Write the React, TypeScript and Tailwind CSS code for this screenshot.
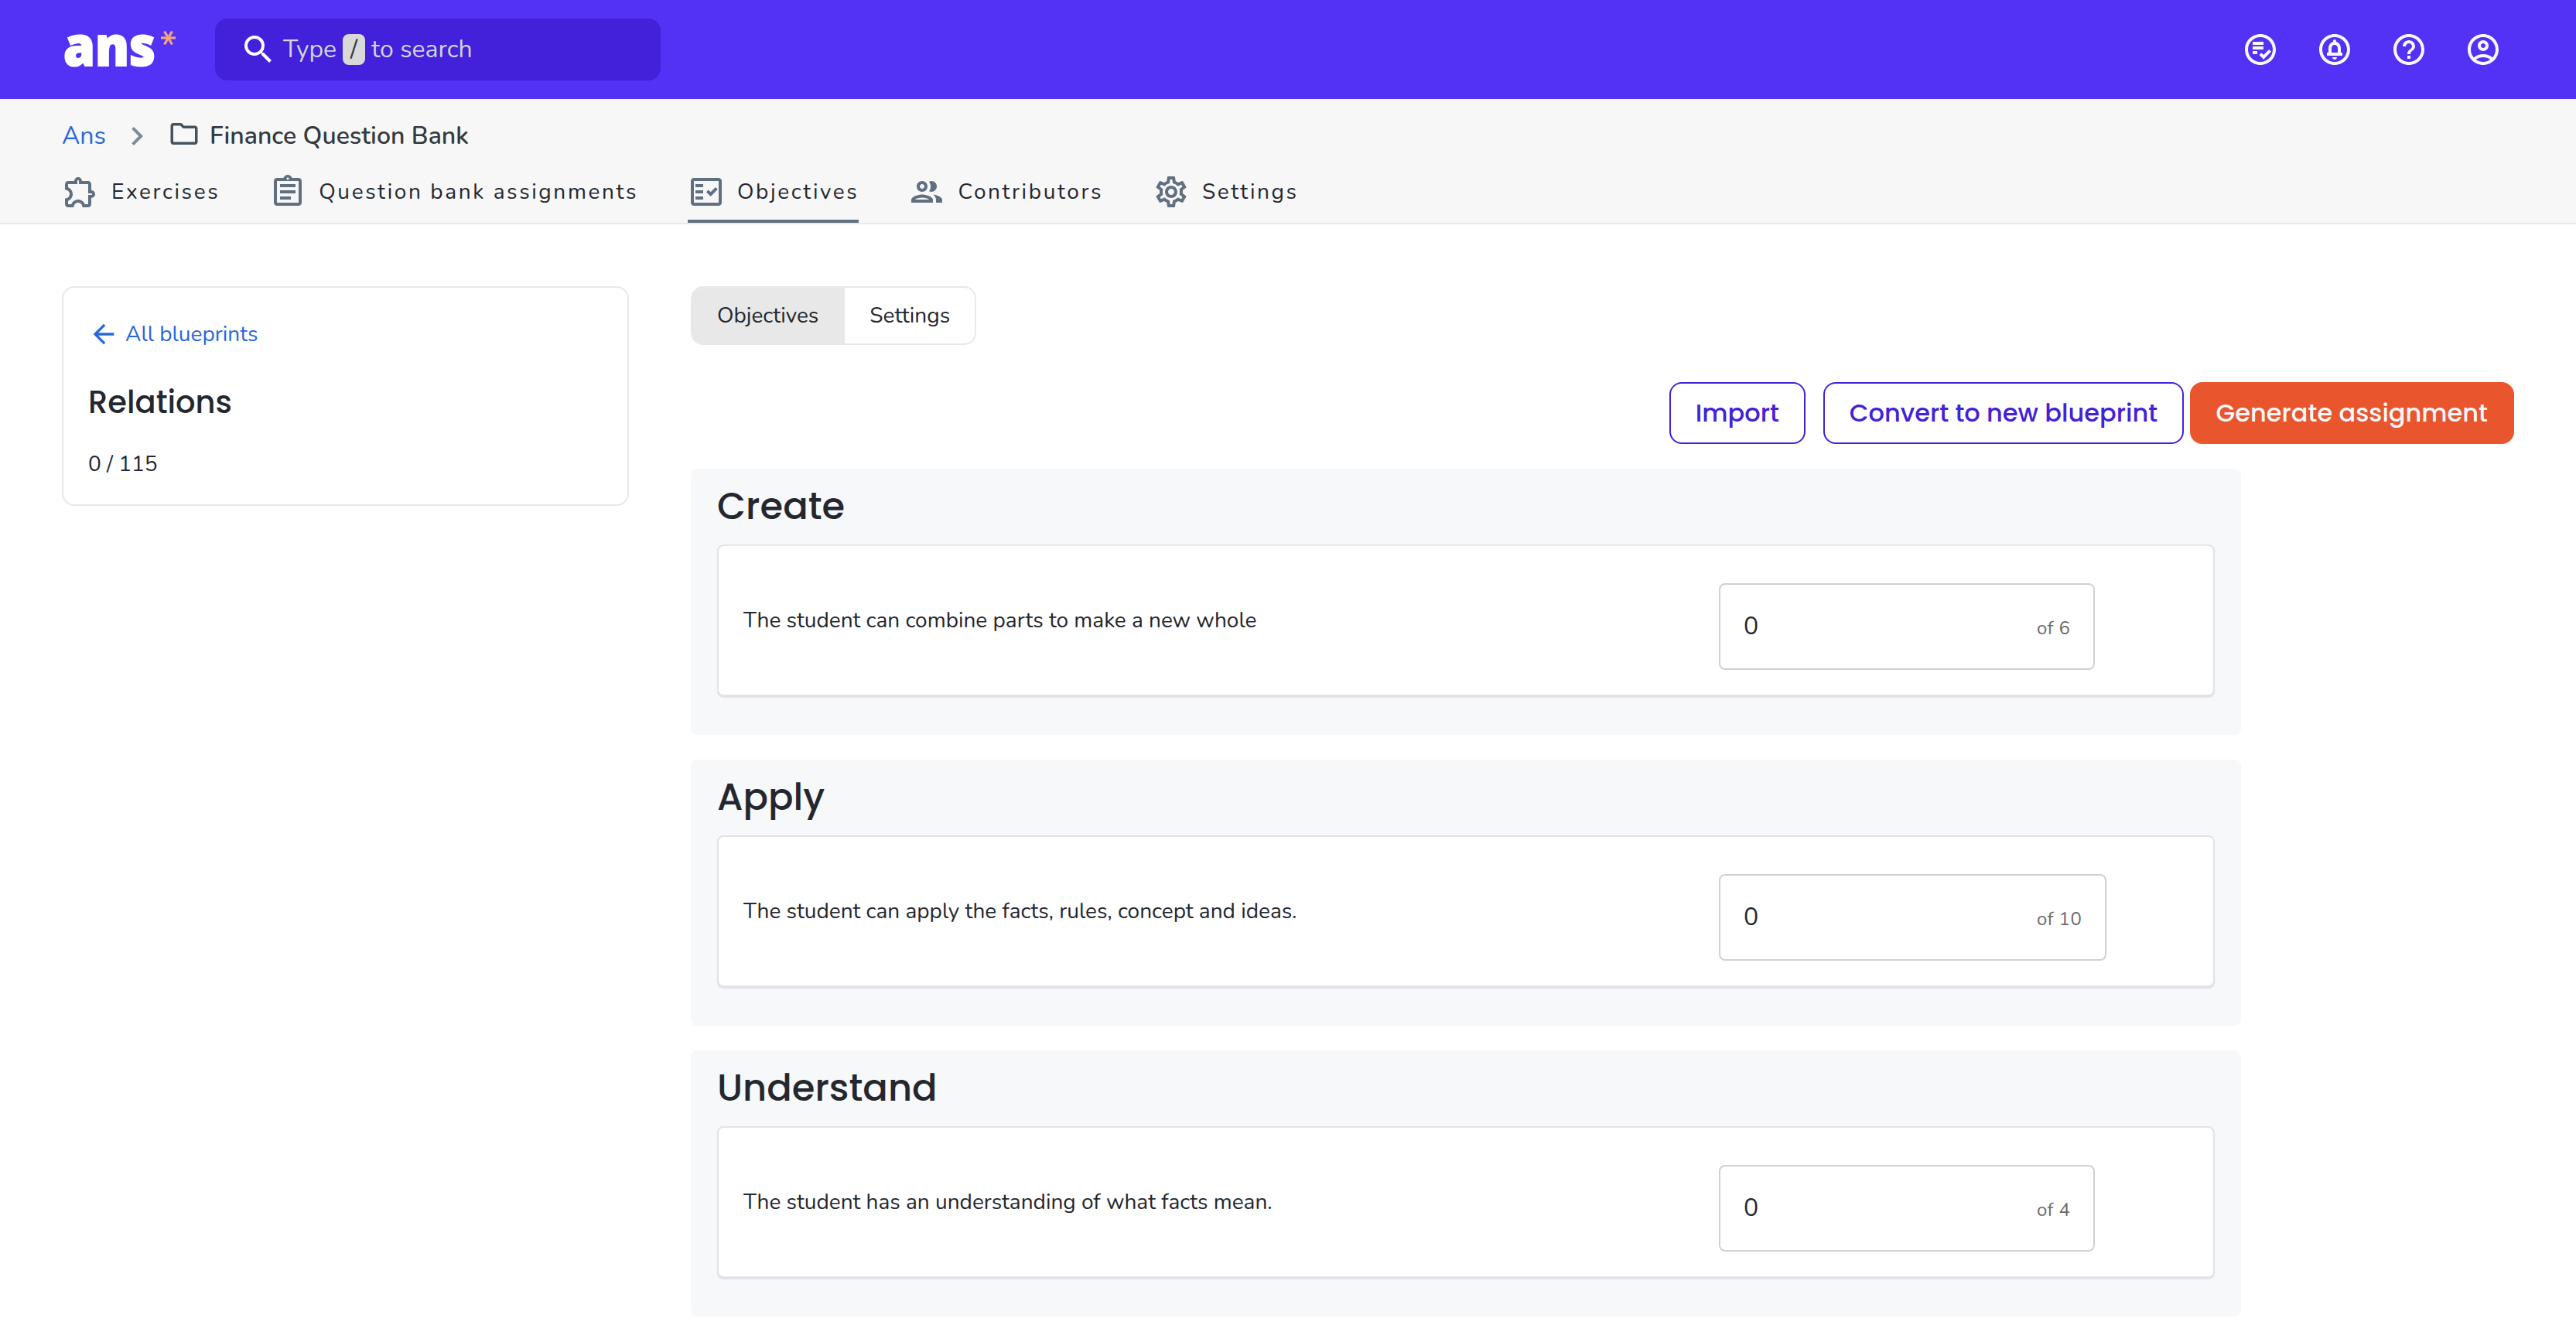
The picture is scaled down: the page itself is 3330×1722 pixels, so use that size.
import type { IconType } from "react-icons";
import {
  MdArrowBack,
  MdChevronRight,
  MdHelpOutline,
  MdOutlineAccountCircle,
  MdOutlineAssignment,
  MdOutlineCircleNotifications,
  MdOutlineExtension,
  MdOutlineFactCheck,
  MdOutlineFolder,
  MdOutlineGroup,
  MdOutlinePlaylistAddCheckCircle,
  MdOutlineSettings,
  MdSearch,
} from "react-icons/md";

interface Tab {
  label: string;
  icon: IconType;
  active?: boolean;
}

interface Objective {
  title: string;
  description: string;
  total: number;
}

const tabs: Tab[] = [
  { label: "Exercises", icon: MdOutlineExtension },
  { label: "Question bank assignments", icon: MdOutlineAssignment },
  { label: "Objectives", icon: MdOutlineFactCheck, active: true },
  { label: "Contributors", icon: MdOutlineGroup },
  { label: "Settings", icon: MdOutlineSettings },
];

const objectives: Objective[] = [
  {
    title: "Create",
    description: "The student can combine parts to make a new whole",
    total: 6,
  },
  {
    title: "Apply",
    description: "The student can apply the facts, rules, concept and ideas.",
    total: 10,
  },
  {
    title: "Understand",
    description: "The student has an understanding of what facts mean.",
    total: 4,
  },
];

const actions: IconType[] = [
  MdOutlinePlaylistAddCheckCircle,
  MdOutlineCircleNotifications,
  MdHelpOutline,
  MdOutlineAccountCircle,
];

function Logo() {
  return (
    <svg width="150" height="128" viewBox="0 0 150 128" aria-label="ans">
      <text
        x="2"
        y="85"
        textLength="119"
        lengthAdjust="spacingAndGlyphs"
        strokeWidth="2"
        className="fill-white stroke-white font-['Noto_Sans',sans-serif] text-[70px] font-black"
      >
        ans
      </text>
      <g stroke="#f0a57c" strokeWidth="3.2">
        <path d="M128 49h19" />
        <path d="M132.500 40.500l10 17" />
        <path d="M142.500 40.500l-10 17" />
      </g>
    </svg>
  );
}

function Header() {
  return (
    <header className="flex h-32 items-center bg-[#5331f5] pr-24 pl-20">
      <Logo />
      <div className="ml-12 flex h-20 w-[576px] items-center gap-2 rounded-2xl bg-[#4320d9] px-8 text-[32px] text-[#ced4da]">
        <MdSearch className="size-12 text-white" />
        <span>Type</span>
        <kbd className="flex h-10 w-[29px] items-center justify-center rounded-lg bg-[#d9d9d9] font-['Nunito','Open_Sans',sans-serif] text-[#343a40]">
          /
        </kbd>
        <span>to search</span>
      </div>
      <div className="ml-auto flex gap-12 text-[#f7f8fb]">
        {actions.map((Icon, index) => (
          <Icon key={index} className="size-12" />
        ))}
      </div>
    </header>
  );
}

function SubHeader() {
  return (
    <div className="h-[162px] border-b-2 border-[#e8e8e8] bg-[#f7f7f7] px-20 pt-6">
      {/* Breadcrumb */}
      <div className="flex h-12 items-center text-[32px]">
        <a className="text-[#2a66db]">Ans</a>
        <MdChevronRight className="ml-4 size-12 text-[#7b8c99]" />
        <MdOutlineFolder className="mr-3 mb-1.5 ml-4 size-[42px] text-[#46525e]" />
        <span className="font-semibold text-[#343a40]">Finance Question Bank</span>
      </div>

      {/* Tabs */}
      <nav className="flex h-[88px] gap-16 text-[28px] tracking-[2.61px]">
        {tabs.map(({ label, icon: Icon, active }) => (
          <a
            key={label}
            className={`flex items-center gap-4 border-b-4 pt-3 ${
              active ? "border-[#607080]" : "border-transparent"
            }`}
          >
            <Icon className="size-12 text-[#607080]" />
            {label}
          </a>
        ))}
      </nav>
    </div>
  );
}

function Sidebar() {
  return (
    <aside className="flex h-[284px] w-[733px] shrink-0 flex-col rounded-2xl border-2 border-[#e8e8e8] px-8 pt-10">
      <a className="flex h-10 items-center gap-2 text-[#2a66db]">
        <MdArrowBack className="size-10" />
        All blueprints
      </a>
      <h2 className="mt-9 font-['Poppins','Inter',sans-serif] text-[40px] leading-[64px] font-medium">
        Relations
      </h2>
      <p className="mt-7 leading-10">0 / 115</p>
    </aside>
  );
}

function ObjectiveSection({ title, description, total }: Objective) {
  return (
    <section className="h-[344px] w-[2004px] rounded-lg bg-[#f7f8fa] px-[34px] pt-[17px]">
      <h3 className="font-['Poppins','Inter',sans-serif] text-[48px] leading-[64px] font-medium">
        {title}
      </h3>
      <div className="mt-[17px] flex h-[196px] items-center rounded-lg border-2 border-[#e2e3e8] bg-white px-8 shadow-[0_2px_1px_#e2e3e8]">
        <p className="w-[1261px]">{description}</p>
        <div className="mt-4 flex h-28 items-center rounded-lg border-2 border-[#d0d0d2] px-[30px]">
          <div className="flex items-baseline">
            <span className="w-[379px] text-[32px]">0</span>
            <span className="text-2xl tracking-[0.4px] text-[#6a6a6a]">of {total}</span>
          </div>
        </div>
      </div>
    </section>
  );
}

export default function App() {
  return (
    <div className="h-[1722px] w-[3330px] overflow-hidden bg-white font-['Nunito','Open_Sans',sans-serif] text-[28px] text-[#24272f]">
      <Header />
      <SubHeader />
      <main className="flex items-start gap-20 p-20">
        <Sidebar />
        <div className="flex-1">
          <div className="flex h-[76px] w-fit overflow-hidden rounded-2xl border-2 border-[#e8e8e8]">
            <button className="bg-[#e8e8e8] pr-[34px] pl-8">Objectives</button>
            <button className="px-8">Settings</button>
          </div>

          <div className="mt-12 flex h-20 justify-end font-['Poppins','Inter',sans-serif] text-[32px] font-medium text-[#4320d9]">
            <button className="mr-[23px] rounded-2xl border-2 border-[#4320d9] px-8">Import</button>
            <button className="mr-[7.5px] rounded-2xl border-2 border-[#4320d9] px-8">
              Convert to new blueprint
            </button>
            <button className="rounded-2xl bg-[#e9562e] px-[34px] text-[#f7f8fb]">
              Generate assignment
            </button>
          </div>

          <div className="mt-8 flex flex-col gap-8">
            {objectives.map((objective) => (
              <ObjectiveSection key={objective.title} {...objective} />
            ))}
          </div>
        </div>
      </main>
    </div>
  );
}
